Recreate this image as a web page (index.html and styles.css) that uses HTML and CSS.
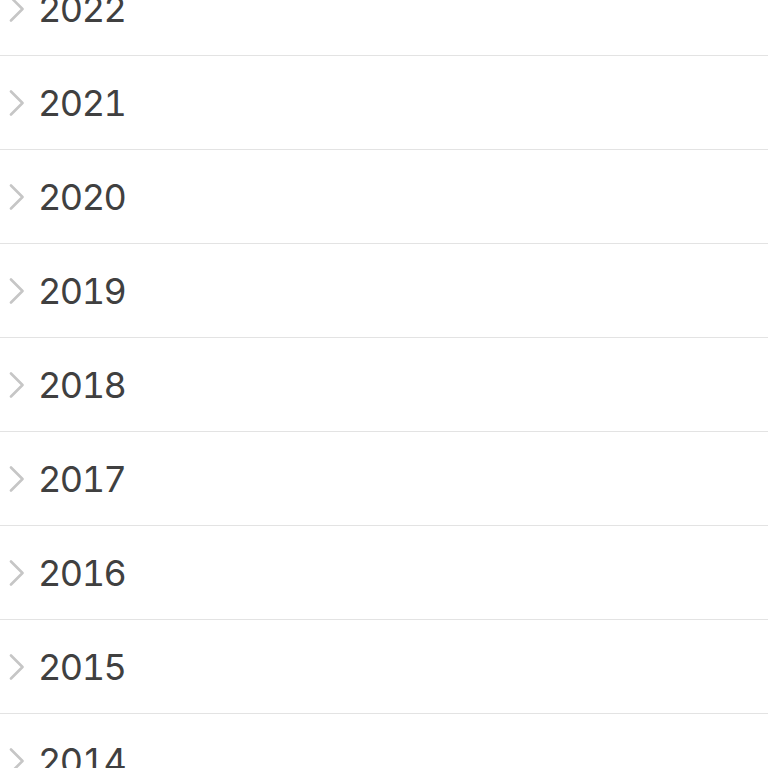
FILE: index.html
```html
<!DOCTYPE html>
<html lang="en">
<head>
    <meta charset="UTF-8">
    <meta name="viewport" content="width=device-width, initial-scale=1.0">
    <title>Archive</title>
    <link rel="stylesheet" href="styles.css">
</head>
<body>
    <ul class="year-list">
        <li class="year-row"><span class="chevron"><svg width="16" height="26" viewBox="0 0 16 26"><path d="M2 1.5 L13.5 13 L2 24.5" fill="none" stroke="#c6c6c6" stroke-width="2.6" stroke-linecap="round" stroke-linejoin="round"/></svg></span><span class="year">2022</span></li>
        <li class="year-row"><span class="chevron"><svg width="16" height="26" viewBox="0 0 16 26"><path d="M2 1.5 L13.5 13 L2 24.5" fill="none" stroke="#c6c6c6" stroke-width="2.6" stroke-linecap="round" stroke-linejoin="round"/></svg></span><span class="year">2021</span></li>
        <li class="year-row"><span class="chevron"><svg width="16" height="26" viewBox="0 0 16 26"><path d="M2 1.5 L13.5 13 L2 24.5" fill="none" stroke="#c6c6c6" stroke-width="2.6" stroke-linecap="round" stroke-linejoin="round"/></svg></span><span class="year">2020</span></li>
        <li class="year-row"><span class="chevron"><svg width="16" height="26" viewBox="0 0 16 26"><path d="M2 1.5 L13.5 13 L2 24.5" fill="none" stroke="#c6c6c6" stroke-width="2.6" stroke-linecap="round" stroke-linejoin="round"/></svg></span><span class="year">2019</span></li>
        <li class="year-row"><span class="chevron"><svg width="16" height="26" viewBox="0 0 16 26"><path d="M2 1.5 L13.5 13 L2 24.5" fill="none" stroke="#c6c6c6" stroke-width="2.6" stroke-linecap="round" stroke-linejoin="round"/></svg></span><span class="year">2018</span></li>
        <li class="year-row"><span class="chevron"><svg width="16" height="26" viewBox="0 0 16 26"><path d="M2 1.5 L13.5 13 L2 24.5" fill="none" stroke="#c6c6c6" stroke-width="2.6" stroke-linecap="round" stroke-linejoin="round"/></svg></span><span class="year">2017</span></li>
        <li class="year-row"><span class="chevron"><svg width="16" height="26" viewBox="0 0 16 26"><path d="M2 1.5 L13.5 13 L2 24.5" fill="none" stroke="#c6c6c6" stroke-width="2.6" stroke-linecap="round" stroke-linejoin="round"/></svg></span><span class="year">2016</span></li>
        <li class="year-row"><span class="chevron"><svg width="16" height="26" viewBox="0 0 16 26"><path d="M2 1.5 L13.5 13 L2 24.5" fill="none" stroke="#c6c6c6" stroke-width="2.6" stroke-linecap="round" stroke-linejoin="round"/></svg></span><span class="year">2015</span></li>
        <li class="year-row"><span class="chevron"><svg width="16" height="26" viewBox="0 0 16 26"><path d="M2 1.5 L13.5 13 L2 24.5" fill="none" stroke="#c6c6c6" stroke-width="2.6" stroke-linecap="round" stroke-linejoin="round"/></svg></span><span class="year">2014</span></li>
    </ul>
</body>
</html>
```
FILE: styles.css
```css
body {
    font-family: Inter, "Liberation Sans", sans-serif;
    background-color: #fff;
    margin: 0;
    overflow: hidden;
}

.year-list {
    list-style: none;
    margin: -38px 0 0 0;
    padding: 0;
}

.year-row {
    height: 93px;
    display: flex;
    align-items: center;
    border-bottom: 1px solid #e3e3e3;
}

.chevron {
    width: 38px;
    padding-left: 9px;
    box-sizing: border-box;
    display: flex;
    align-items: center;
}

.year {
    font-size: 36px;
    color: #404040;
    font-variant-numeric: tabular-nums;
    letter-spacing: -1.5px;
}
```
